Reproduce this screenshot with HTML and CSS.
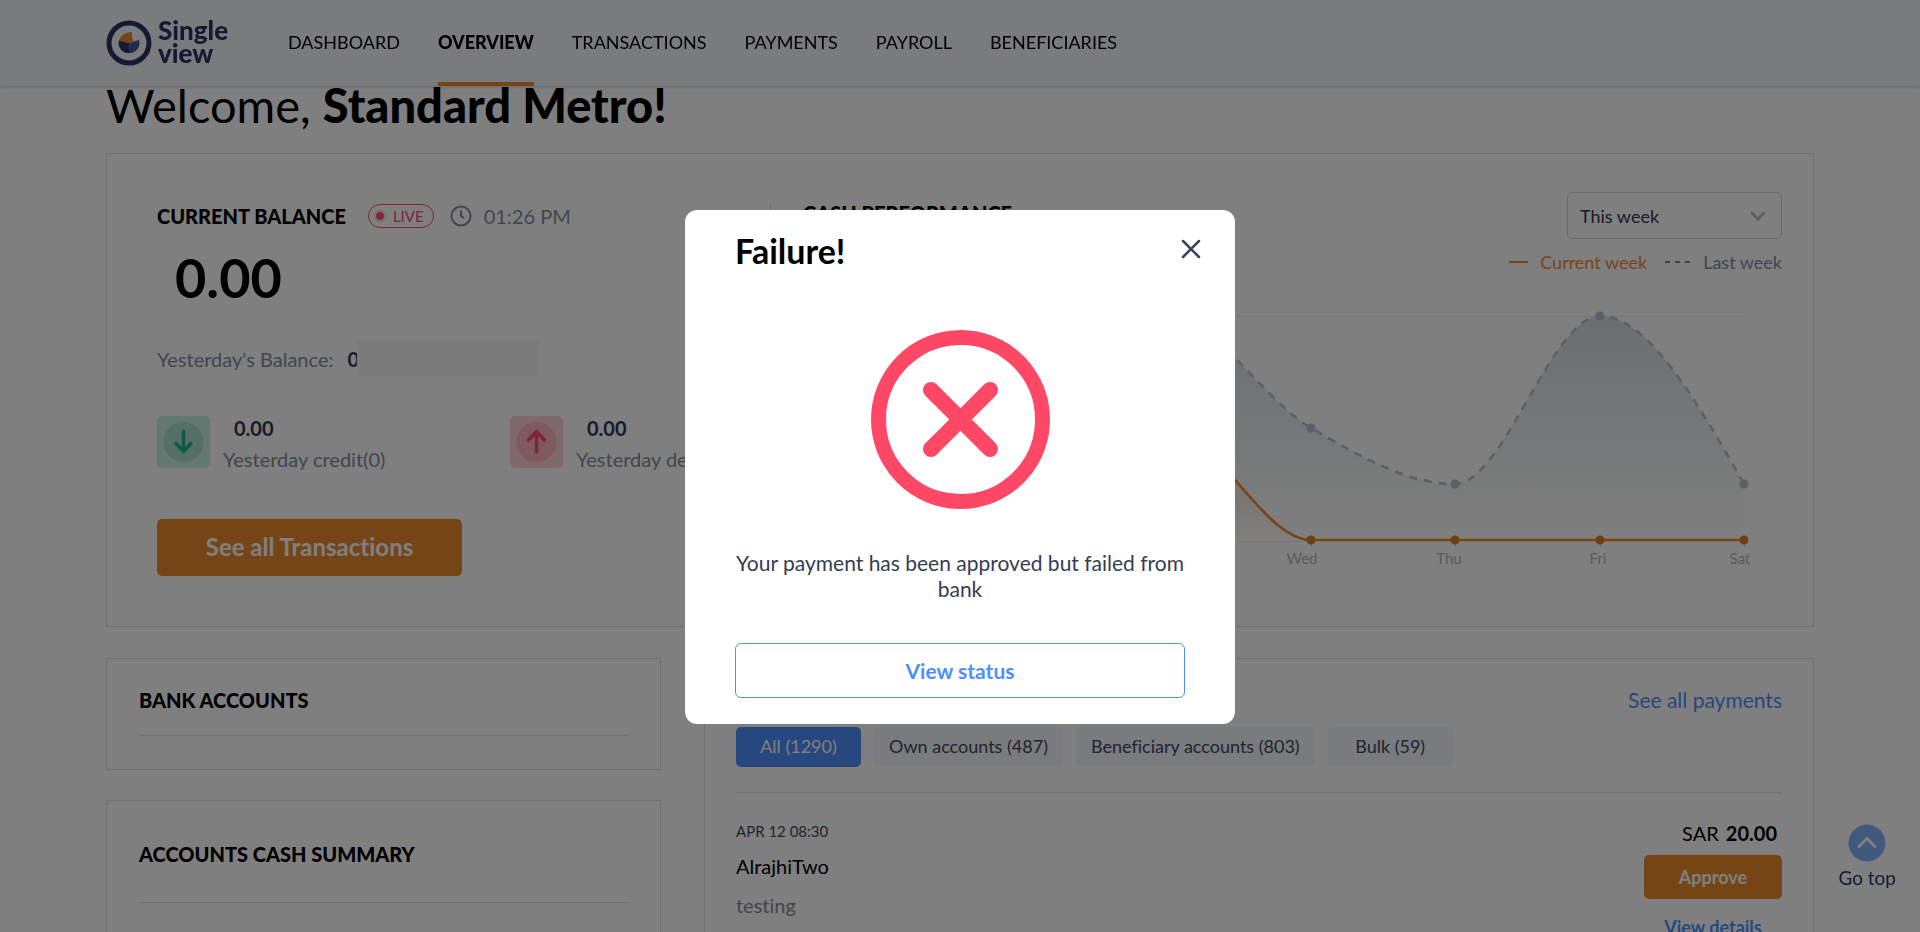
FILE: index.html
```html
<!DOCTYPE html>
<html lang="en">
<head>
<meta charset="utf-8">
<title>Single view - Overview</title>
<link rel="stylesheet" href="styles.css">
</head>
<body>
<header class="topbar">
  <a class="logo" href="#" aria-label="Single view home">
    <svg class="logo-mark" viewBox="0 0 46 46" aria-hidden="true">
      <circle cx="23" cy="23" r="20" fill="none" stroke="#2b3462" stroke-width="5"/>
      <path d="M23 23 L13 20 A10 10 0 0 0 24 33 Z" fill="#2b3462"/>
      <path d="M23 23 L24 33 A10 10 0 0 0 33 20 Z" fill="#40599f"/>
      <path d="M23 23 L13 21 C14 16 19 12 26 12 L26 18 L28 22 Z" fill="#ed8a2e"/>
    </svg>
    <span class="logo-text">Single<br>view</span>
  </a>
  <nav class="nav">
    <a href="#">DASHBOARD</a>
    <a href="#" class="active" aria-current="page">OVERVIEW</a>
    <a href="#">TRANSACTIONS</a>
    <a href="#">PAYMENTS</a>
    <a href="#">PAYROLL</a>
    <a href="#">BENEFICIARIES</a>
  </nav>
</header>

<main class="page">
  <h1 class="welcome">Welcome, <b>Standard Metro!</b></h1>

  <section class="card hero">
    <div class="balance">
      <div class="balance-head">
        <h2 class="title">CURRENT BALANCE</h2>
        <span class="live"><svg viewBox="0 0 12 12" aria-hidden="true"><circle cx="6" cy="6" r="5.5" fill="none" stroke="#e6c6cd" stroke-width="1"/><circle cx="6" cy="6" r="4" fill="#ff4866"/></svg>LIVE</span>
        <span class="time"><svg viewBox="0 0 22 22" aria-hidden="true"><circle cx="11" cy="11" r="9.5"/><path d="M11 5.500 V11 L14 13"/></svg>01:26 PM</span>
      </div>
      <p class="amount">0.00</p>
      <p class="yesterday">Yesterday's Balance: <b>0</b><span class="mask"></span></p>
      <div class="flows">
        <div class="flow">
          <svg class="flow-icon" viewBox="0 0 53 52" aria-hidden="true"><rect width="53" height="52" rx="5" fill="#cbeee3"/><circle cx="26.500" cy="26" r="20" fill="#a8dfcd"/><path d="M26.500 15.500 V35 M19 27.500 L26.500 35.500 L34 27.500" fill="none" stroke="#1fb287" stroke-width="3.500" stroke-linecap="round" stroke-linejoin="round"/></svg>
          <div><b class="flow-value">0.00</b><span class="flow-label">Yesterday credit(0)</span></div>
        </div>
        <div class="flow">
          <svg class="flow-icon" viewBox="0 0 53 52" aria-hidden="true"><rect width="53" height="52" rx="5" fill="#ffd0d8"/><circle cx="26.500" cy="26" r="20" fill="#ffb2bf"/><path d="M26.500 36 V16 M18.500 24 L26.500 15.500 L34.500 24" fill="none" stroke="#ff4866" stroke-width="3.500" stroke-linecap="round" stroke-linejoin="round"/></svg>
          <div><b class="flow-value">0.00</b><span class="flow-label">Yesterday debit(0)</span></div>
        </div>
      </div>
      <button class="btn-main" type="button">See all Transactions</button>
    </div>

    <div class="performance">
      <div class="perf-head">
        <h2 class="title">CASH PERFORMANCE</h2>
        <div class="select-wrap">
          <select class="select" aria-label="Period"><option>This week</option></select>
          <svg viewBox="0 0 16 10" aria-hidden="true"><path d="M2 2 L8 8 L14 2" fill="none" stroke="#bfbfbf" stroke-width="3" stroke-linecap="round"/></svg>
        </div>
      </div>
      <div class="legend">
        <span class="leg-current"><i></i>Current week</span>
        <span class="leg-last"><svg viewBox="0 0 26 2" aria-hidden="true"><path d="M0 1 H26" stroke="#7f8798" stroke-width="2" stroke-dasharray="5 5"/></svg>Last week</span>
      </div>
      <svg class="chart" viewBox="803 300 979 270" role="img" aria-label="Cash performance by day">
        <defs>
          <linearGradient id="lastFill" gradientUnits="userSpaceOnUse" x1="0" y1="316" x2="0" y2="541"><stop offset="0" stop-color="#7f8798" stop-opacity=".3"/><stop offset=".55" stop-color="#9aa5ae" stop-opacity=".18"/><stop offset="1" stop-color="#9aa5ae" stop-opacity="0"/></linearGradient>
          <linearGradient id="nowFill" gradientUnits="userSpaceOnUse" x1="0" y1="428" x2="0" y2="541"><stop offset="0" stop-color="#ed8a2e" stop-opacity=".3"/><stop offset="1" stop-color="#ed8a2e" stop-opacity="0"/></linearGradient>
        </defs>
        <path d="M877 316.500 H1745 M877 541.500 H1311" stroke="#ecedf5" fill="none"/>
        <path d="M1311.500 541 V547 M1455.500 541 V547 M1600.500 541 V547 M1744.500 541 V547" stroke="#d8dae2"/>
        <path d="M877 541 V316 H1166 C1214 316 1263 400 1311 428 C1359 456 1407 484 1455 484 C1503 484 1552 316 1600 316 C1648 316 1696 400 1744 484 V541 Z" fill="url(#lastFill)"/>
        <path d="M877 541 V428 H1166 C1214 428 1263 541 1311 541 Z" fill="url(#nowFill)"/>
        <path d="M877 316 H1166 C1214 316 1263 400 1311 428 C1359 456 1407 484 1455 484 C1503 484 1552 316 1600 316 C1648 316 1696 400 1744 484" fill="none" stroke="#b9bec8" stroke-width="2.500" stroke-dasharray="8 7"/>
        <path d="M877 428 H1166 C1214 428 1263 540 1311 540 H1744" fill="none" stroke="#ed8a2e" stroke-width="2.500"/>
        <g fill="#b9bec8"><circle cx="1311" cy="428" r="4.500"/><circle cx="1455" cy="484" r="4.500"/><circle cx="1600" cy="316" r="4.500"/><circle cx="1744" cy="484" r="4.500"/></g>
        <g fill="#dc7c28"><circle cx="1311" cy="540" r="4.500"/><circle cx="1455" cy="540" r="4.500"/><circle cx="1600" cy="540" r="4.500"/><circle cx="1744" cy="540" r="4.500"/></g>
        <g class="chart-label"><text x="1302" y="564">Wed</text><text x="1449" y="564">Thu</text><text x="1598" y="564">Fri</text><text x="1740" y="564">Sat</text></g>
      </svg>
    </div>
  </section>

  <div class="columns">
    <div class="side">
      <section class="card side-card"><h2 class="title side-title">BANK ACCOUNTS</h2></section>
      <section class="card side-card tall"><h2 class="title side-title">ACCOUNTS CASH SUMMARY</h2></section>
    </div>
    <section class="card payments">
      <div class="pay-head"><h2 class="title">PENDING PAYMENTS</h2><a href="#">See all payments</a></div>
      <div class="tabs">
        <button type="button" class="tab on">All (1290)</button>
        <button type="button" class="tab">Own accounts (487)</button>
        <button type="button" class="tab">Beneficiary accounts (803)</button>
        <button type="button" class="tab">Bulk (59)</button>
      </div>
      <article class="payment">
        <div>
          <p class="pay-date">APR 12 08:30</p>
          <p class="pay-name">AlrajhiTwo</p>
          <p class="pay-note">testing</p>
        </div>
        <div class="pay-actions">
          <p class="pay-sum">SAR <b>20.00</b></p>
          <button type="button" class="approve">Approve</button>
          <a href="#" class="details">View details</a>
        </div>
      </article>
    </section>
  </div>
</main>

<a class="gotop" href="#">
  <svg viewBox="0 0 38 38" aria-hidden="true"><circle cx="19" cy="19" r="18.500" fill="#87b0fb"/><path d="M11 22.500 L19 14.500 L27 22.500" fill="none" stroke="#fff" stroke-width="3" stroke-linecap="round"/></svg>
  Go top
</a>

<div class="overlay">
  <div class="modal" role="dialog" aria-modal="true" aria-labelledby="failure">
    <h2 class="modal-title" id="failure">Failure!</h2>
    <button class="close" type="button" aria-label="Close"><svg viewBox="0 0 20 20" aria-hidden="true"><path d="M2 2 L18 18 M18 2 L2 18" stroke="#3a4358" stroke-width="2.500" stroke-linecap="round"/></svg></button>
    <svg class="fail-icon" viewBox="0 0 179 179" aria-hidden="true"><circle cx="89.500" cy="89.500" r="82" fill="none" stroke="#ff4866" stroke-width="15"/><path d="M60 60 L119 119 M119 60 L60 119" stroke="#ff4866" stroke-width="16" stroke-linecap="round"/></svg>
    <p class="modal-text">Your payment has been approved but failed from bank</p>
    <button class="status" type="button">View status</button>
  </div>
</div>
</body>
</html>
```
FILE: styles.css
```css
* { box-sizing: border-box; }
body {
  margin: 0;
  height: 100vh;
  overflow: hidden;
  background: #fff;
  color: #000;
  font-family: Lato, "Open Sans", sans-serif;
  font-size: 20px;
  font-variant-ligatures: none;
  line-height: 26px;
}
h1, h2, p { margin: 0; font-weight: 400; }
a { color: inherit; text-decoration: none; }
button, select { font-family: inherit; font-variant-ligatures: none; cursor: pointer; }
svg { display: block; flex: none; }

/* Top bar */
.topbar {
  position: fixed;
  top: 0;
  left: 0;
  right: 0;
  z-index: 2;
  display: flex;
  gap: 56px;
  height: 86px;
  padding: 0 106px;
  background: #f4f6fd;
  box-shadow: 0 1px 4px rgba(0, 0, 0, .2);
}
.logo { display: flex; align-items: center; gap: 6px; }
.logo-mark { width: 46px; height: 46px; }
.logo-text { width: 74px; padding-bottom: 2px; color: #2b3462; font-size: 26px; font-weight: 900; line-height: 23px; }
.nav { display: flex; gap: 38px; font-size: 18px; }
.nav a { display: flex; align-items: center; padding-bottom: 2px; border-top: 4px solid transparent; border-bottom: 4px solid transparent; }
.nav .active { border-bottom-color: #ed8a2e; font-weight: 900; }

/* Page */
.page { height: 100vh; padding: 75px 106px 0; overflow: hidden; }
.welcome { font-size: 47px; line-height: 60px; }
.welcome b { font-weight: 900; }
.card { border: 1px solid #dcdde6; background: #fff; }
.title { font-size: 20px; font-weight: 900; line-height: 26px; }
.hero {
  display: grid;
  grid-template-columns: 613fr 1012fr;
  height: 474px;
  margin-top: 18px;
  padding: 38px 31px 49px 50px;
}

/* Balance */
.balance { padding-top: 11px; }
.balance-head { display: flex; align-items: center; }
.live {
  display: flex;
  align-items: center;
  gap: 7px;
  height: 24px;
  margin-left: 22px;
  padding: 0 9px 0 5px;
  border: 1px solid #ff4866;
  border-radius: 12px;
  color: #ff4866;
  font-size: 15px;
}
.live svg { width: 12px; height: 12px; }
.time { display: flex; align-items: center; gap: 12px; margin-left: 16px; color: #858b9b; }
.time svg { width: 22px; height: 22px; fill: none; stroke: #858b9b; stroke-width: 2; }
.amount { margin: 17px 0 0 18px; font-size: 54px; font-weight: 700; line-height: 64px; }
.yesterday { display: flex; align-items: center; height: 35px; margin-top: 31px; color: #858b9b; }
.yesterday b { width: 10px; margin-left: 14px; overflow: hidden; color: #2f3850; }
.mask { width: 182px; height: 35px; background: #f6f6f6; }
.flows { display: grid; grid-template-columns: 353px 1fr; margin-top: 34px; }
.flow { display: flex; align-items: flex-start; gap: 13px; white-space: nowrap; }
.flow-icon { width: 53px; height: 52px; margin-top: 6px; }
.flow-value { display: block; margin: 5px 0 5px 11px; color: #2f3850; }
.flow-label { display: block; color: #858b9b; }
.btn-main {
  width: 305px;
  height: 57px;
  margin-top: 47px;
  padding-bottom: 3px;
  border: 0;
  border-radius: 5px;
  background: #ed8a2e;
  color: #fff;
  font-size: 24px;
  font-weight: 700;
}

/* Cash performance */
.performance { margin-top: 12px; padding-left: 32px; border-left: 1px solid #dcdde6; }
.perf-head { display: flex; justify-content: space-between; margin-top: -12px; }
.perf-head .title { padding-top: 8px; }
.select-wrap { position: relative; }
.select {
  width: 215px;
  height: 47px;
  padding: 0 12px;
  border: 1px solid #d3d5e4;
  border-radius: 5px;
  background: transparent;
  color: #2f3850;
  font-size: 18px;
  appearance: none;
}
.select-wrap svg { position: absolute; right: 16px; top: 19px; width: 16px; height: 10px; pointer-events: none; }
.legend { display: flex; justify-content: flex-end; gap: 18px; margin-top: 10px; font-size: 18px; }
.legend span { display: flex; align-items: center; gap: 12px; }
.legend i { width: 19px; height: 2px; background: #ed8a2e; }
.legend svg { width: 26px; height: 2px; }
.leg-current { color: #ed8a2e; }
.leg-last { color: #858b9b; }
.chart { width: 100%; margin-top: 25px; }
.chart-label { fill: #b3b7c1; font-size: 15px; text-anchor: middle; }

/* Lower columns */
.columns { display: grid; grid-template-columns: 1fr 2fr; gap: 43px; margin-top: 31px; }
.side { display: flex; flex-direction: column; gap: 30px; }
.side-card { height: 112px; padding: 0 31px 0 32px; }
.side-title { padding: 28px 0 22px; border-bottom: 1px solid #dcdde6; }
.tall { height: 240px; }
.tall .side-title { padding: 40px 0 35px; }
.payments { height: 400px; padding: 0 31px; }
.pay-head { display: flex; justify-content: space-between; padding-top: 28px; }
.pay-head a { color: #4e8efe; font-size: 21px; }
.tabs { display: flex; gap: 13px; padding: 14px 0 25px; border-bottom: 1px solid #dcdde6; }
.tab {
  min-width: 125px;
  height: 40px;
  padding: 0 15px 2px;
  border: 0;
  border-radius: 5px;
  background: #f4f6fd;
  color: #414858;
  font-size: 18px;
}
.tab.on { background: #4e8efe; color: #fff; }
.payment { display: flex; justify-content: space-between; padding-top: 25px; }
.pay-date { color: #414858; font-size: 15px; }
.pay-name { margin-top: 9px; }
.pay-note { height: 26px; margin-top: 13px; color: #858b9b; }
.pay-actions { display: flex; flex-direction: column; align-items: center; width: 138px; padding-top: 2px; }
.pay-sum { align-self: flex-end; padding-right: 5px; white-space: pre; }
.pay-sum b { margin-left: 2px; }
.approve { width: 138px; height: 44px; margin-top: 9px; border: 0; border-radius: 5px; background: #ed8a2e; color: #fff; font-size: 18px; font-weight: 700; }
.details { margin-top: 15px; color: #4e8efe; font-size: 18px; font-weight: 700; }

/* Floating link to the top of the page */
.gotop {
  position: fixed;
  right: 24px;
  bottom: 41px;
  display: flex;
  flex-direction: column;
  align-items: center;
  gap: 3px;
  color: #2b3462;
  font-size: 19px;
}
.gotop svg { width: 38px; height: 38px; }

/* Dialog */
.overlay {
  position: fixed;
  inset: 0;
  z-index: 5;
  display: flex;
  align-items: flex-start;
  justify-content: center;
  padding-top: 210px;
  background: rgba(0, 0, 0, .5);
}
.modal {
  position: relative;
  display: flex;
  flex-direction: column;
  width: 550px;
  padding: 21px 50px 26px;
  border-radius: 12px;
  background: #fff;
}
.modal-title { font-size: 34px; font-weight: 700; line-height: 40px; }
.close { position: absolute; top: 29px; right: 34px; padding: 0; border: 0; background: none; }
.close svg { width: 20px; height: 20px; }
.fail-icon { width: 179px; height: 179px; margin: 59px auto 41px; }
.modal-text { color: #343d52; font-size: 21px; text-align: center; }
.status {
  height: 55px;
  margin-top: 41px;
  border: 1px solid #4e8efe;
  border-radius: 6px;
  background: #fff;
  color: #4e8efe;
  font-size: 21px;
  font-weight: 700;
}
```
